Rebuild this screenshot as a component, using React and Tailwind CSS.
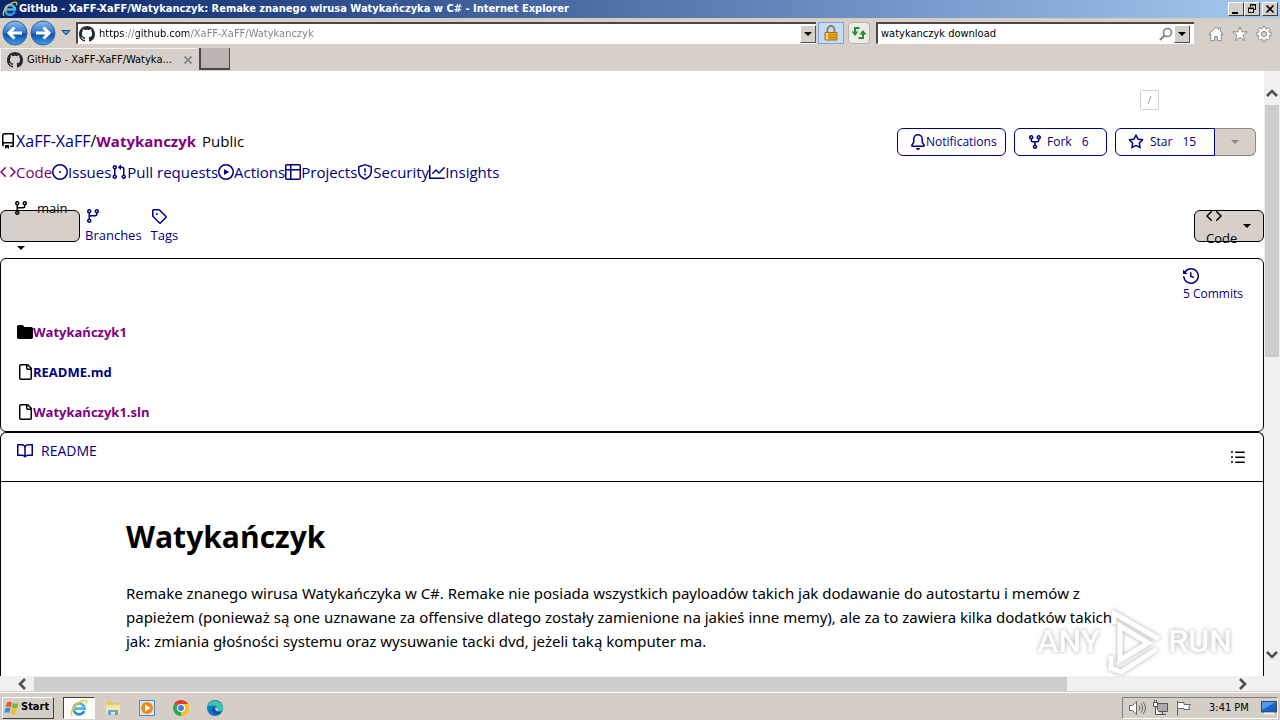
import React, { useState } from 'react'

// 16px glyphs used by the repository page
const ICONS = {
  github:
    'M8 0c4.42 0 8 3.58 8 8a8.013 8.013 0 0 1-5.45 7.59c-.4.08-.55-.17-.55-.38 0-.27.01-1.13.01-2.2 0-.75-.25-1.23-.54-1.48 1.78-.2 3.65-.88 3.65-3.95 0-.88-.31-1.59-.82-2.15.08-.2.36-1.02-.08-2.12 0 0-.67-.22-2.2.82-.64-.18-1.32-.27-2-.27-.68 0-1.36.09-2 .27-1.53-1.03-2.2-.82-2.2-.82-.44 1.1-.16 1.92-.08 2.12-.51.56-.82 1.28-.82 2.15 0 3.06 1.86 3.75 3.64 3.95-.23.2-.44.55-.51 1.07-.46.21-1.61.55-2.33-.66-.15-.24-.6-.83-1.23-.82-.67.01-.27.38.01.53.34.19.73.9.82 1.13.16.45.68 1.31 2.69.94 0 .67.01 1.3.01 1.49 0 .21-.15.45-.55.38A7.995 7.995 0 0 1 0 8c0-4.42 3.58-8 8-8Z',
  repo: 'M2 2.5A2.5 2.5 0 0 1 4.5 0h8.75a.75.75 0 0 1 .75.75v12.5a.75.75 0 0 1-.75.75h-2.5a.75.75 0 0 1 0-1.5h1.75v-2h-8a1 1 0 0 0-.714 1.7.75.75 0 1 1-1.072 1.05A2.495 2.495 0 0 1 2 11.5Zm10.5-1h-8a1 1 0 0 0-1 1v6.708A2.486 2.486 0 0 1 4.5 9h8ZM5 12.25a.25.25 0 0 1 .25-.25h3.5a.25.25 0 0 1 .25.25v3.25a.25.25 0 0 1-.4.2l-1.45-1.087a.249.249 0 0 0-.3 0L5.4 15.7a.25.25 0 0 1-.4-.2Z',
  code: 'm11.28 3.22 4.25 4.25a.75.75 0 0 1 0 1.06l-4.25 4.25a.749.749 0 0 1-1.275-.326.749.749 0 0 1 .215-.734L13.94 8l-3.72-3.72a.749.749 0 0 1 .326-1.275.749.749 0 0 1 .734.215Zm-6.56 0a.751.751 0 0 1 1.042.018.751.751 0 0 1 .018 1.042L2.06 8l3.72 3.72a.749.749 0 0 1-.326 1.275.749.749 0 0 1-.734-.215L.47 8.53a.75.75 0 0 1 0-1.06Z',
  issue: 'M8 9a1 1 0 1 0 0-2 1 1 0 0 0 0 2ZM8 0a8 8 0 1 1 0 16A8 8 0 0 1 8 0ZM1.5 8a6.5 6.5 0 1 0 13 0 6.5 6.5 0 0 0-13 0Z',
  pull: 'M1.5 3.25a2.25 2.25 0 1 1 3 2.122v5.256a2.251 2.251 0 1 1-1.5 0V5.372A2.25 2.25 0 0 1 1.5 3.25Zm5.677-.177L9.573.677A.25.25 0 0 1 10 .854V2.5h1A2.5 2.5 0 0 1 13.5 5v5.628a2.251 2.251 0 1 1-1.5 0V5a1 1 0 0 0-1-1h-1v1.646a.25.25 0 0 1-.427.177L7.177 3.427a.25.25 0 0 1 0-.354ZM3.75 2.5a.75.75 0 1 0 0 1.5.75.75 0 0 0 0-1.5Zm0 9.5a.75.75 0 1 0 0 1.5.75.75 0 0 0 0-1.5Zm8.25.75a.75.75 0 1 0 1.5 0 .75.75 0 0 0-1.5 0Z',
  play: 'M8 0a8 8 0 1 1 0 16A8 8 0 0 1 8 0ZM1.5 8a6.5 6.5 0 1 0 13 0 6.5 6.5 0 0 0-13 0Zm4.879-2.773 4.264 2.559a.25.25 0 0 1 0 .428l-4.264 2.559A.25.25 0 0 1 6 10.559V5.442a.25.25 0 0 1 .379-.215Z',
  table: 'M0 1.75C0 .784.784 0 1.75 0h12.5C15.216 0 16 .784 16 1.75v12.5A1.75 1.75 0 0 1 14.25 16H1.75A1.75 1.75 0 0 1 0 14.25ZM6.5 6.5v8h7.75a.25.25 0 0 0 .25-.25V6.5Zm8-1.5V1.75a.25.25 0 0 0-.25-.25H6.5V5Zm-13 1.5v7.75c0 .138.112.25.25.25H5v-8ZM5 5V1.5H1.75a.25.25 0 0 0-.25.25V5Z',
  shield: 'M7.467.133a1.748 1.748 0 0 1 1.066 0l5.25 1.68A1.75 1.75 0 0 1 15 3.48V7c0 1.566-.32 3.182-1.303 4.682-.983 1.498-2.585 2.813-5.032 3.855a1.697 1.697 0 0 1-1.33 0c-2.447-1.042-4.049-2.357-5.032-3.855C1.32 10.182 1 8.566 1 7V3.48a1.75 1.75 0 0 1 1.217-1.667Zm.61 1.429a.25.25 0 0 0-.153 0l-5.25 1.68a.25.25 0 0 0-.174.238V7c0 1.358.275 2.666 1.057 3.86.784 1.194 2.121 2.34 4.366 3.297a.196.196 0 0 0 .154 0c2.245-.956 3.582-2.104 4.366-3.298C13.225 9.666 13.5 8.36 13.5 7V3.48a.251.251 0 0 0-.174-.237l-5.25-1.68ZM8.75 4.75v3a.75.75 0 0 1-1.5 0v-3a.75.75 0 0 1 1.5 0ZM9 10.5a1 1 0 1 1-2 0 1 1 0 0 1 2 0Z',
  graph: 'M1.5 1.75V13.5h13.75a.75.75 0 0 1 0 1.5H.75a.75.75 0 0 1-.75-.75V1.75a.75.75 0 0 1 1.5 0Zm14.28 2.53-5.25 5.25a.75.75 0 0 1-1.06 0L7 7.06 4.28 9.78a.751.751 0 0 1-1.042-.018.751.751 0 0 1-.018-1.042l3.25-3.25a.75.75 0 0 1 1.06 0L10 7.94l4.72-4.72a.751.751 0 0 1 1.042.018.751.751 0 0 1 .018 1.042Z',
  branch: 'M9.5 3.25a2.25 2.25 0 1 1 3 2.122V6A2.5 2.5 0 0 1 10 8.5H6a1 1 0 0 0-1 1v1.128a2.251 2.251 0 1 1-1.5 0V5.372a2.25 2.25 0 1 1 1.5 0v1.836A2.493 2.493 0 0 1 6 7h4a1 1 0 0 0 1-1v-.628A2.25 2.25 0 0 1 9.5 3.25Zm-6 0a.75.75 0 1 0 1.5 0 .75.75 0 0 0-1.5 0Zm8.25-.75a.75.75 0 1 0 0 1.5.75.75 0 0 0 0-1.5ZM4.25 12a.75.75 0 1 0 0 1.5.75.75 0 0 0 0-1.5Z',
  tag: 'M1 7.775V2.75C1 1.784 1.784 1 2.75 1h5.025c.464 0 .91.184 1.238.513l6.25 6.25a1.75 1.75 0 0 1 0 2.474l-5.026 5.026a1.75 1.75 0 0 1-2.474 0l-6.25-6.25A1.752 1.752 0 0 1 1 7.775Zm1.5 0c0 .066.026.13.073.177l6.25 6.25a.25.25 0 0 0 .354 0l5.025-5.025a.25.25 0 0 0 0-.354l-6.25-6.25a.25.25 0 0 0-.177-.073H2.75a.25.25 0 0 0-.25.25ZM6 5a1 1 0 1 1 0 2 1 1 0 0 1 0-2Z',
  bell: 'M8 16a2 2 0 0 0 1.985-1.75c.017-.137-.097-.25-.235-.25h-3.5c-.138 0-.252.113-.235.25A2 2 0 0 0 8 16ZM3 5a5 5 0 0 1 10 0v2.947c0 .05.015.098.042.139l1.703 2.555A1.519 1.519 0 0 1 13.482 13H2.518a1.516 1.516 0 0 1-1.263-2.36l1.703-2.554A.255.255 0 0 0 3 7.947Zm5-3.5A3.5 3.5 0 0 0 4.5 5v2.947c0 .346-.102.683-.294.97l-1.703 2.556a.017.017 0 0 0-.003.01l.001.006c0 .002.002.004.004.006l.006.004.007.001h10.964l.007-.001.006-.004.004-.006.001-.007a.017.017 0 0 0-.003-.01l-1.703-2.554a1.745 1.745 0 0 1-.294-.97V5A3.5 3.5 0 0 0 8 1.5Z',
  fork: 'M5 5.372v.878c0 .414.336.75.75.75h4.5a.75.75 0 0 0 .75-.75v-.878a2.25 2.25 0 1 1 1.5 0v.878a2.25 2.25 0 0 1-2.25 2.25h-1.5v2.128a2.251 2.251 0 1 1-1.5 0V8.5h-1.5A2.25 2.25 0 0 1 3.5 6.25v-.878a2.25 2.25 0 1 1 1.5 0ZM5 3.25a.75.75 0 1 0-1.5 0 .75.75 0 0 0 1.5 0Zm6.75.75a.75.75 0 1 0 0-1.5.75.75 0 0 0 0 1.5Zm-3 8.75a.75.75 0 1 0-1.5 0 .75.75 0 0 0 1.5 0Z',
  star: 'M8 .25a.75.75 0 0 1 .673.418l1.882 3.815 4.21.612a.75.75 0 0 1 .416 1.279l-3.046 2.97.719 4.192a.751.751 0 0 1-1.088.791L8 12.347l-3.766 1.98a.75.75 0 0 1-1.088-.79l.72-4.194L.818 6.374a.75.75 0 0 1 .416-1.28l4.21-.611L7.327.668A.75.75 0 0 1 8 .25Zm0 2.445L6.615 5.5a.75.75 0 0 1-.564.41l-3.097.45 2.24 2.184a.75.75 0 0 1 .216.664l-.528 3.084 2.769-1.456a.75.75 0 0 1 .698 0l2.77 1.456-.53-3.084a.75.75 0 0 1 .216-.664l2.24-2.183-3.096-.45a.75.75 0 0 1-.564-.41L8 2.694Z',
  history: 'm.427 1.927 1.215 1.215a8.002 8.002 0 1 1-1.6 5.685.75.75 0 1 1 1.493-.154 6.5 6.5 0 1 0 1.18-4.458l1.358 1.358A.25.25 0 0 1 3.896 6H.25A.25.25 0 0 1 0 5.75V2.104a.25.25 0 0 1 .427-.177ZM7.75 4a.75.75 0 0 1 .75.75v2.992l2.028.812a.75.75 0 0 1-.557 1.392l-2.5-1A.751.751 0 0 1 7 8.25v-3.5A.75.75 0 0 1 7.75 4Z',
  folder: 'M1.75 1A1.75 1.75 0 0 0 0 2.75v10.5C0 14.216.784 15 1.75 15h12.5A1.75 1.75 0 0 0 16 13.25v-8.5A1.75 1.75 0 0 0 14.25 3H7.5a.25.25 0 0 1-.2-.1l-.9-1.2C6.07 1.26 5.55 1 5 1H1.75Z',
  file: 'M2 1.75C2 .784 2.784 0 3.75 0h6.586c.464 0 .909.184 1.237.513l2.914 2.914c.329.328.513.773.513 1.237v9.586A1.75 1.75 0 0 1 13.25 16h-9.5A1.75 1.75 0 0 1 2 14.25Zm1.75-.25a.25.25 0 0 0-.25.25v12.5c0 .138.112.25.25.25h9.5a.25.25 0 0 0 .25-.25V6h-2.75A1.75 1.75 0 0 1 9 4.25V1.5Zm6.75.062V4.25c0 .138.112.25.25.25h2.688l-.011-.013-2.914-2.914-.013-.011Z',
  book: 'M0 1.75A.75.75 0 0 1 .75 1h4.253c1.227 0 2.317.59 3 1.501A3.743 3.743 0 0 1 11.006 1h4.245a.75.75 0 0 1 .75.75v10.5a.75.75 0 0 1-.75.75h-4.507a2.25 2.25 0 0 0-1.591.659l-.622.621a.75.75 0 0 1-1.06 0l-.622-.621A2.25 2.25 0 0 0 5.258 13H.75a.75.75 0 0 1-.75-.75Zm7.251 10.324.004-5.073-.002-2.253A2.25 2.25 0 0 0 5.003 2.5H1.5v9h3.757a3.75 3.75 0 0 1 1.994.574ZM8.755 4.75l-.004 7.322a3.752 3.752 0 0 1 1.992-.572H14.5v-9h-3.495a2.25 2.25 0 0 0-2.25 2.25Z',
  list: 'M5.75 2.5h8.5a.75.75 0 0 1 0 1.5h-8.5a.75.75 0 0 1 0-1.5Zm0 5h8.5a.75.75 0 0 1 0 1.5h-8.5a.75.75 0 0 1 0-1.5Zm0 5h8.5a.75.75 0 0 1 0 1.5h-8.5a.75.75 0 0 1 0-1.5ZM2 14a1 1 0 1 1 0-2 1 1 0 0 1 0 2Zm1-6a1 1 0 1 1-2 0 1 1 0 0 1 2 0ZM2 4a1 1 0 1 1 0-2 1 1 0 0 1 0 2Z',
}

const NAV = [
  { icon: 'code', label: 'Code', visited: true },
  { icon: 'issue', label: 'Issues' },
  { icon: 'pull', label: 'Pull requests' },
  { icon: 'play', label: 'Actions' },
  { icon: 'table', label: 'Projects' },
  { icon: 'shield', label: 'Security' },
  { icon: 'graph', label: 'Insights' },
]

const FILES = [
  { icon: 'folder', name: 'Watykańczyk1', visited: true },
  { icon: 'file', name: 'README.md', visited: false },
  { icon: 'file', name: 'Watykańczyk1.sln', visited: true },
]

function Icon({ name, className = 'size-4' }) {
  return (
    <svg viewBox="0 0 16 16" fill="currentColor" className={`shrink-0 ${className}`} aria-hidden="true">
      <path d={ICONS[name]} />
    </svg>
  )
}

function Caret({ className = '' }) {
  return (
    <svg viewBox="0 0 8 4" className={`h-1 w-2 shrink-0 ${className}`} fill="currentColor" aria-hidden="true">
      <path d="M0 0h8L4 4z" />
    </svg>
  )
}

function IeLogo({ className }) {
  return (
    <svg viewBox="0 0 16 16" className={`shrink-0 ${className}`} fill="none" aria-hidden="true">
      <path d="M12.7 10.6A4.9 4.9 0 1 1 13 8.6H4.4" stroke="#4db4ec" strokeWidth="2.5" />
      <path d="M12.4 10.9A4.9 4.9 0 0 1 4 11" stroke="#1c7fd0" strokeWidth="1.4" />
      <path d="M2.2 14.6C-1 13 4 4.600 10 2c4-1.700 5.600-.6 4.400 2.200" stroke="#f3c52c" strokeWidth="1.3" />
    </svg>
  )
}

function RoundArrow({ label, flip, id }) {
  return (
    <button type="button" aria-label={label} className="size-[26px]">
      <svg viewBox="0 0 26 26" className="size-[26px]" aria-hidden="true">
        <defs>
          <linearGradient id={id} x1="0" y1="0" x2="0" y2="1">
            <stop offset="0" stopColor="#8fbcec" />
            <stop offset=".48" stopColor="#2f78cc" />
            <stop offset=".55" stopColor="#0f4fa8" />
            <stop offset="1" stopColor="#3fa4ee" />
          </linearGradient>
        </defs>
        <circle cx="13" cy="13" r="12" fill={`url(#${id})`} stroke="#3c5f93" />
        <path
          d={flip ? 'M6 13h13M13.500 7.500 19 13l-5.500 5.500' : 'M20 13H7M12.500 7.500 7 13l5.500 5.500'}
          fill="none"
          stroke="#fff"
          strokeWidth="3"
        />
      </svg>
    </button>
  )
}

function TitleBar() {
  const box =
    'flex h-[14px] w-4 items-center justify-center border border-[#404040] border-t-white border-l-white bg-[#d4d0c8] text-black'
  return (
    <header className="flex h-[18px] items-center justify-between bg-linear-to-r from-[#0a246a] to-[#a6caf0] pr-[2px] pl-[2px]">
      <div className="flex items-center gap-px">
        <IeLogo className="size-4" />
        <h1 className="text-[11px] leading-4 font-bold whitespace-nowrap text-white">
          GitHub - XaFF-XaFF/Watykanczyk: Remake znanego wirusa Watykańczyka w C# - Internet Explorer
        </h1>
      </div>
      <div className="flex">
        <button type="button" aria-label="Minimize" className={box}>
          <svg viewBox="0 0 10 10" className="size-[10px]"><path d="M1 8h6v2H1z" /></svg>
        </button>
        <button type="button" aria-label="Restore" className={box}>
          <svg viewBox="0 0 10 10" className="size-[10px]" fill="none" stroke="currentColor">
            <path d="M3.500 3V.5h5v5H7M3 1h6M1.500 4.500h5v4h-5zM1 4h6" />
          </svg>
        </button>
        <button type="button" aria-label="Close" className={`${box} ml-[2px]`}>
          <svg viewBox="0 0 10 10" className="size-[10px]" fill="none" stroke="currentColor" strokeWidth="1.600">
            <path d="m1.500 1.500 7 7m0-7-7 7" />
          </svg>
        </button>
      </div>
    </header>
  )
}

function DropButton({ label }) {
  return (
    <button
      type="button"
      aria-label={label}
      className="flex h-[18px] w-4 shrink-0 items-center justify-center border border-[#505050] border-t-white border-l-white bg-[#d4d0c8]"
    >
      <Caret />
    </button>
  )
}

function Toolbar() {
  const [url, setUrl] = useState('https://github.com/XaFF-XaFF/Watykanczyk')
  const [query, setQuery] = useState('watykanczyk download')
  const field = 'flex h-[22px] items-center border-t-2 border-l-2 border-b border-[#4d4644] border-b-white bg-white'

  return (
    <div className="flex h-[30px] items-center border-t-2 border-[#d4d0c0] bg-[#d6cfca] pb-[2px] pl-[2px]">
      <RoundArrow label="Back" id="back" />
      <div className="w-[2px]" />
      <RoundArrow label="Forward" id="forward" flip />
      <button type="button" aria-label="Recent pages" className="mx-1 flex h-4 w-3 items-center justify-center">
        <svg viewBox="0 0 10 6" className="h-[6px] w-[10px]"><path d="M1 .5h8L5 5z" fill="#4aa0dc" stroke="#1c4876" /></svg>
      </button>
      <div className={`${field} min-w-0 flex-1`}>
        <Icon name="github" className="ml-px size-4 text-[#24292f]" />
        <input
          aria-label="Address"
          value={url}
          onChange={(e) => setUrl(e.target.value)}
          className="ml-1 min-w-0 flex-1 bg-[linear-gradient(90deg,#000_26px,#808080_26px,#808080_37px,#000_37px,#000_90px,#808080_90px)] bg-clip-text text-[11px] leading-4 text-transparent caret-black outline-none"
        />
        <DropButton label="Show address list" />
      </div>
      <button type="button" aria-label="Security report" className="ml-[2px] flex h-[22px] w-[26px] items-center justify-center border border-[#7da7dc] bg-[#c5daf3]">
        <svg viewBox="0 0 14 16" className="h-4 w-[14px]" aria-hidden="true">
          <path d="M3.500 8V4.500a3.500 3.500 0 0 1 7 0V8" fill="none" stroke="#8a7a58" strokeWidth="1.800" />
          <path d="M1 7.500h12V15H1z" fill="#e2a21c" stroke="#a8740c" />
          <path d="M1.500 10h11M1.500 12.500h11" stroke="#c4860f" />
          <path d="M3 8v6.500" stroke="#f8d77a" strokeWidth="2" />
        </svg>
      </button>
      <button type="button" aria-label="Refresh" className="ml-1 flex h-[22px] w-[22px] items-center justify-center rounded-sm border border-[#b8b4b0] bg-[#ecebe8]">
        <svg viewBox="0 0 16 16" className="size-4" fill="none" stroke="#2e8b32" strokeWidth="2" aria-hidden="true">
          <path d="M8.500 3H4v5M7.500 13H12V8" />
          <path d="M.5 6.500h7L4 11zM8.500 9.500h7L12 5z" fill="#2e8b32" stroke="none" />
        </svg>
      </button>
      <div className={`${field} ml-[6px] w-[318px] shrink-0`}>
        <input
          aria-label="Search"
          value={query}
          onChange={(e) => setQuery(e.target.value)}
          className="ml-[3px] min-w-0 flex-1 text-[11px] leading-4 text-black outline-none"
        />
        <button type="button" aria-label="Search" className="mr-px">
          <svg viewBox="0 0 14 14" className="size-[14px]" fill="none" stroke="#808080" aria-hidden="true">
            <circle cx="8.500" cy="5.500" r="4" strokeWidth="1.600" />
            <path d="m5.500 8.500-4.500 4.500" strokeWidth="2.200" />
          </svg>
        </button>
        <DropButton label="Search options" />
        <div className="w-1" />
      </div>
      <div className="flex gap-2 pt-[2px] pr-2 pl-[14px]">
        <button type="button" aria-label="Home">
          <svg viewBox="0 0 16 16" className="size-4" fill="#fff" stroke="#8e8a87" aria-hidden="true">
            <path d="M8 1 .8 8.200h2v6.500h3.700v-4h3v4h3.700V8.200h2L12.500 5.500V2h-2v1.500z" />
          </svg>
        </button>
        <button type="button" aria-label="Favorites">
          <svg viewBox="0 0 16 16" className="size-4" fill="#fff" stroke="#8e8a87" aria-hidden="true">
            <path d="m8 .8 2 5h5.300l-4.200 3.400 1.600 5.500L8 11.500l-4.700 3.200 1.600-5.500L.7 5.800H6z" />
          </svg>
        </button>
        <button type="button" aria-label="Tools">
          <svg viewBox="0 0 16 16" className="size-4" fill="#fff" stroke="#8e8a87" aria-hidden="true">
            <path d="M6.800.6h2.400l.4 2 1.100.5 1.700-1.200 1.700 1.700-1.200 1.700.5 1.100 2 .4v2.400l-2 .4-.5 1.100 1.200 1.700-1.700 1.700-1.700-1.200-1.100.5-.4 2H6.800l-.4-2-1.100-.5-1.700 1.200-1.700-1.700 1.200-1.700-.5-1.100-2-.4V6.800l2-.4.5-1.100-1.200-1.700 1.700-1.700 1.700 1.200 1.100-.5z" />
            <circle cx="8" cy="8" r="2.600" fill="#d6cfca" />
          </svg>
        </button>
      </div>
    </div>
  )
}

function TabStrip() {
  return (
    <div className="flex h-[23px] bg-[#d6cfca]">
      <div className="flex w-[197px] items-center border-t border-l border-[#f4f1ee] pl-[6px]">
        <Icon name="github" className="size-4 text-[#24292f]" />
        <span className="ml-1 flex-1 text-[11px] leading-4 whitespace-nowrap">GitHub - XaFF-XaFF/Watyka...</span>
        <button type="button" aria-label="Close tab" className="mr-[5px]">
          <svg viewBox="0 0 8 8" className="size-2" stroke="#8a8683" strokeWidth="1.800"><path d="m.5.5 7 7m0-7-7 7" /></svg>
        </button>
      </div>
      <button
        type="button"
        aria-label="New tab"
        className="ml-[2px] h-[22px] w-[31px] border-r border-b-2 border-l-2 border-[#4d4644] bg-[#bab3af]"
      />
    </div>
  )
}

function PageHeader() {
  const btn = 'flex h-7 items-center border border-[#000080] text-xs text-[#000080]'
  return (
    <div className="mt-[18px] flex h-7 items-center pr-2 text-base leading-6">
      <div className="flex flex-1 items-center pb-[2px]">
        <Icon name="repo" />
        <a href="#owner" className="text-[#000080]">XaFF-XaFF</a>
        <span>/</span>
        <a href="#repo" className="text-[15px] font-bold text-[#800080]">Watykanczyk</a>
        <span className="ml-[6px] text-[15px]">Public</span>
      </div>
      <div className="flex gap-2">
        <a href="#notifications" className={`${btn} w-[109px] rounded-md pl-3`}>
          <Icon name="bell" />
          Notifications
        </a>
        <a href="#fork" className={`${btn} w-[93px] rounded-md pl-3`}>
          <Icon name="fork" />
          <span className="ml-1">Fork</span>
          <span className="ml-[10px]">6</span>
        </a>
        <div className="flex">
          <a href="#star" className={`${btn} w-[100px] rounded-l-md pl-3`}>
            <Icon name="star" />
            <span className="ml-[6px]">Star</span>
            <span className="ml-[10px]">15</span>
          </a>
          <button
            type="button"
            disabled
            aria-label="Add to list"
            className="flex h-7 w-[41px] items-center justify-center rounded-r-md border border-l-0 border-[#8d8884] bg-[#d6cfca] text-[#8d8884]"
          >
            <Caret />
          </button>
        </div>
      </div>
    </div>
  )
}

function BranchBar() {
  return (
    <div className="mt-[26px] flex h-8 items-center text-[13px] leading-5">
      <button
        type="button"
        className="flex h-8 w-20 flex-col items-start justify-center gap-5 rounded-md border border-black bg-[#d6cfca] pt-1 pl-3"
      >
        <span className="flex h-5 shrink-0 items-center">
          <Icon name="branch" />
          <span className="ml-2">main</span>
        </span>
        <span className="flex h-5 shrink-0 items-center pl-1">
          <Caret />
        </span>
      </button>
      <a href="#branches" className="ml-[5px] text-[#000080]">
        <Icon name="branch" />
        <span className="block pt-px">Branches</span>
      </a>
      <a href="#tags" className="ml-[9px] flex-1 text-[#000080]">
        <Icon name="tag" />
        <span className="block pt-px">Tags</span>
      </a>
      <button
        type="button"
        className="flex h-8 w-[70px] items-center justify-between rounded-md border border-black bg-[#d6cfca] pr-3 pl-[11px] text-left"
      >
        <span className="pt-1">
          <Icon name="code" />
          <span className="block pt-1">Code</span>
        </span>
        <Caret />
      </button>
    </div>
  )
}

function FileBox() {
  return (
    <section className="mt-4 rounded-md border border-black">
      <div className="flex h-[52px] justify-end pt-[9px] pr-5">
        <a href="#commits" className="text-xs leading-5 text-[#000080]">
          <Icon name="history" />
          <span className="block">5 Commits</span>
        </a>
      </div>
      <ul>
        {FILES.map((f) => (
          <li key={f.name} className="flex h-10 items-center pt-px pl-4">
            <Icon name={f.icon} />
            <a href="#file" className={`text-[13px] leading-5 font-bold ${f.visited ? 'text-[#800080]' : 'text-[#000080]'}`}>
              {f.name}
            </a>
          </li>
        ))}
      </ul>
    </section>
  )
}

function Readme() {
  return (
    <section className="flex-1 rounded-t-md border border-b-0 border-black">
      <div className="flex h-[49px] justify-between border-b border-black pr-[17px] pl-4">
        <a href="#readme" className="flex h-9 items-center gap-2 text-sm leading-5 text-[#000080]">
          <Icon name="book" />
          README
        </a>
        <button type="button" aria-label="Outline">
          <Icon name="list" />
        </button>
      </div>
      <article className="mx-auto max-w-[1012px] pt-8 whitespace-nowrap">
        <h2 className="text-[30px] leading-[46px] font-bold">Watykańczyk</h2>
        <p className="mt-[21px] font-['Noto_Sans',sans-serif] text-[15px] leading-6">
          Remake znanego wirusa Watykańczyka w C#. Remake nie posiada wszystkich payloadów takich jak dodawanie do autostartu i memów z
          <br />
          papieżem (ponieważ są one uznawane za offensive dlatego zostały zamienione na jakieś inne memy), ale za to zawiera kilka dodatków takich
          <br />
          jak: zmiania głośności systemu oraz wysuwanie tacki dvd, jeżeli taką komputer ma.
        </p>
      </article>
    </section>
  )
}

function Chevron({ d }) {
  return (
    <svg viewBox="0 0 12 12" className="size-3" fill="none" stroke="#505050" strokeWidth="2.600" aria-hidden="true">
      <path d={d} />
    </svg>
  )
}

function VerticalScroll() {
  return (
    <div className="flex w-4 shrink-0 flex-col items-center justify-between bg-[#f0f0f0] pb-[15px]">
      <div className="flex w-full flex-col items-center">
        <button type="button" aria-label="Scroll up" className="flex h-[34px] items-end pb-[6px]">
          <Chevron d="m1 9 5-5 5 5" />
        </button>
        <div className="h-[252px] w-[14px] bg-[#cdcdcd]" />
      </div>
      <button type="button" aria-label="Scroll down">
        <Chevron d="m1 3 5 5 5-5" />
      </button>
    </div>
  )
}

function HorizontalScroll() {
  return (
    <div className="flex h-4 items-center bg-[#f0f0f0] pl-4">
      <button type="button" aria-label="Scroll left" className="w-[18px]">
        <Chevron d="M9 1 4 6l5 5" />
      </button>
      <div className="mr-4 flex flex-1 items-center justify-between">
        <div className="h-[14px] w-[84%] bg-[#cdcdcd]" />
        <button type="button" aria-label="Scroll right" className="mr-[15px]">
          <Chevron d="m3 1 5 5-5 5" />
        </button>
      </div>
    </div>
  )
}

function Watermark() {
  return (
    <div className="pointer-events-none absolute right-12 bottom-[46px] flex items-center gap-[5px] font-['Roboto',sans-serif] text-[32px] leading-10 font-medium text-white opacity-70 [filter:drop-shadow(0_0_2px_#888)]">
      <span>ANY</span>
      <svg viewBox="0 0 58 66" className="h-[66px] w-[58px]" fill="none" stroke="#fff" aria-hidden="true">
        <path d="M15 18v34l28-17z" strokeWidth="5" />
        <path d="M9 16V5l45 26M6 48v12l10 4 36-23" strokeWidth="5" />
      </svg>
      <span>RUN</span>
    </div>
  )
}

function Taskbar() {
  return (
    <footer className="flex h-7 items-center border-t border-white bg-[#d5cec6] px-[2px] pt-[2px] shadow-[0_-1px_0_#d5cec6]">
      <button
        type="button"
        className="flex h-[22px] w-[52px] items-center gap-px border border-[#404040] border-t-white border-l-white pl-px text-[11px] font-bold"
      >
        <svg viewBox="0 0 16 16" className="size-4" aria-hidden="true">
          <path d="M3 2.500c2-1.300 3.500-.8 5 0L6.800 7.200c-1.500-.8-3-1.100-5 0z" fill="#e8562c" />
          <path d="M9 3c1.800.9 3.500 1.200 5.600 0l-1.300 4.700c-2 1.200-3.600.9-5.500 0z" fill="#7cb928" />
          <path d="M1.500 8.300c2-1.200 3.500-.8 5 0L5.200 13c-1.500-.8-3-1.100-5 0z" fill="#3c8ee0" />
          <path d="M7.500 8.800c1.800.9 3.500 1.200 5.500 0l-1.300 4.700c-2 1.200-3.600.9-5.500 0z" fill="#f6bc1c" />
        </svg>
        Start
      </button>
      <button type="button" aria-label="Internet Explorer" className="ml-[9px] flex h-[22px] w-8 items-center justify-center border border-white border-t-[#404040] border-l-[#404040] bg-white">
        <IeLogo className="size-[18px]" />
      </button>
      <div className="ml-[9px] flex gap-4">
        <button type="button" aria-label="File Explorer">
          <svg viewBox="0 0 18 18" className="size-[18px]" aria-hidden="true">
            <path d="M2 2h5l1 2h7v11H2z" fill="#e9c967" />
            <path d="M2 6h14v9H2z" fill="#f7e6a4" />
            <path d="M4 16v-5h10v5h-3v-3H7v3z" fill="#58a9dc" />
          </svg>
        </button>
        <button type="button" aria-label="Media Player">
          <svg viewBox="0 0 18 18" className="size-[18px]" aria-hidden="true">
            <path d="M1.500 1.500h15v15h-15z" fill="#d8e8f5" stroke="#4e88bd" />
            <circle cx="9" cy="9" r="6" fill="#f28a1a" />
            <path d="m7 5.500 5.500 3.500L7 12.500z" fill="#fff" />
          </svg>
        </button>
        <button type="button" aria-label="Chrome">
          <svg viewBox="0 0 18 18" className="size-[18px]" aria-hidden="true">
            <path d="M9 9 2.100 5A8 8 0 0 1 15.900 5z" fill="#e33b2e" />
            <path d="M9 9V5h6.900A8 8 0 0 1 9 17z" fill="#fbc116" />
            <path d="M9 9v8A8 8 0 0 1 2.100 5L9 9z" fill="#2da94f" />
            <circle cx="9" cy="9" r="4" fill="#fff" />
            <circle cx="9" cy="9" r="3" fill="#3f7ee8" />
          </svg>
        </button>
        <button type="button" aria-label="Edge">
          <svg viewBox="0 0 18 18" className="size-[18px]" aria-hidden="true">
            <circle cx="9" cy="9" r="8" fill="#1277c9" />
            <path d="M1.200 8A8 8 0 0 1 17 9c0 3-3 4-5.500 3 1.500-3-.5-5.500-4-5.500C4 6.500 2 7 1.200 8z" fill="#3ac9a5" />
            <path d="M9.500 8.500c-2 2-.5 5.500 6 4-3 4.500-9 3-9.500-.5-.3-2 1.500-4 3.500-3.500z" fill="#0d4f9e" />
            <path d="M9.500 8.500c-.8 1.500.3 3.500 2.500 3.800.5-1.800 0-3.800-2.500-3.800z" fill="#d5cec6" />
          </svg>
        </button>
      </div>
      <div className="ml-auto flex h-[22px] w-[156px] items-center border border-white border-t-[#808080] border-l-[#808080] pl-[5px] text-[11px] leading-4">
        <svg viewBox="0 0 18 16" className="h-4 w-[18px]" fill="#fff" stroke="#666" aria-hidden="true">
          <path d="M1.500 5.500h3l4-4v13l-4-4h-3z" />
          <path d="M11 5.500q2 2.500 0 5M13 3.500q3.500 4.500 0 9M15 2q5 6 0 12" fill="none" />
        </svg>
        <svg viewBox="0 0 16 16" className="ml-[6px] size-4" fill="none" stroke="#555" aria-hidden="true">
          <path d="M5.500 3.500h10v8h-10zM7 14.500h7M10.500 12v2" fill="#aaa" />
          <path d="M1.500 2.500h4v4h-4zM2.500 0v2M4.500 0v2M3.500 7v7.500H8" fill="#fff" />
        </svg>
        <svg viewBox="0 0 16 16" className="ml-2 size-4" fill="#fff" stroke="#666" aria-hidden="true">
          <path d="M1.500 1v14.500M2 2.500h6v2h6.500l-2 3 1.500 2H8v-1H2" />
        </svg>
        <span className="ml-[17px] whitespace-nowrap">3:41 PM</span>
        <button type="button" aria-label="Show desktop" className="ml-auto">
          <svg viewBox="0 0 16 14" className="h-[14px] w-4" aria-hidden="true">
            <path d="M.5.500h15v10.500H.5z" fill="#1d62c4" stroke="#2b4470" />
            <path d="M1 1h14L1 9z" fill="#4f9be8" />
            <path d="M3 12.500h10" stroke="#eee" strokeWidth="2" />
          </svg>
        </button>
      </div>
    </footer>
  )
}

export default function App() {
  return (
    <div className="relative flex h-screen flex-col overflow-hidden bg-white font-['DejaVu_Sans_Condensed','DejaVu_Sans',sans-serif] text-black">
      <TitleBar />
      <Toolbar />
      <TabStrip />
      <div className="flex min-h-0 flex-1">
        <main className="flex min-w-0 flex-1 flex-col overflow-hidden font-['Open_Sans','Noto_Sans',sans-serif]">
          <div className="flex justify-end pt-[19px] pr-[105px]">
            <kbd className="flex h-5 w-[19px] items-center justify-center rounded-xs border border-[#d0d0d0] font-['Open_Sans','Noto_Sans',sans-serif] text-[11px] text-[#999]">
              /
            </kbd>
          </div>
          <PageHeader />
          <nav className="mt-1 flex h-6 items-center text-[15px] leading-6">
            {NAV.map((item) => (
              <a
                key={item.label}
                href={`#${item.icon}`}
                className={`flex items-center ${item.visited ? 'text-[#800080]' : 'text-[#000080]'}`}
              >
                <Icon name={item.icon} />
                {item.label}
              </a>
            ))}
          </nav>
          <BranchBar />
          <FileBox />
          <Readme />
        </main>
        <VerticalScroll />
      </div>
      <HorizontalScroll />
      <Taskbar />
      <Watermark />
    </div>
  )
}
